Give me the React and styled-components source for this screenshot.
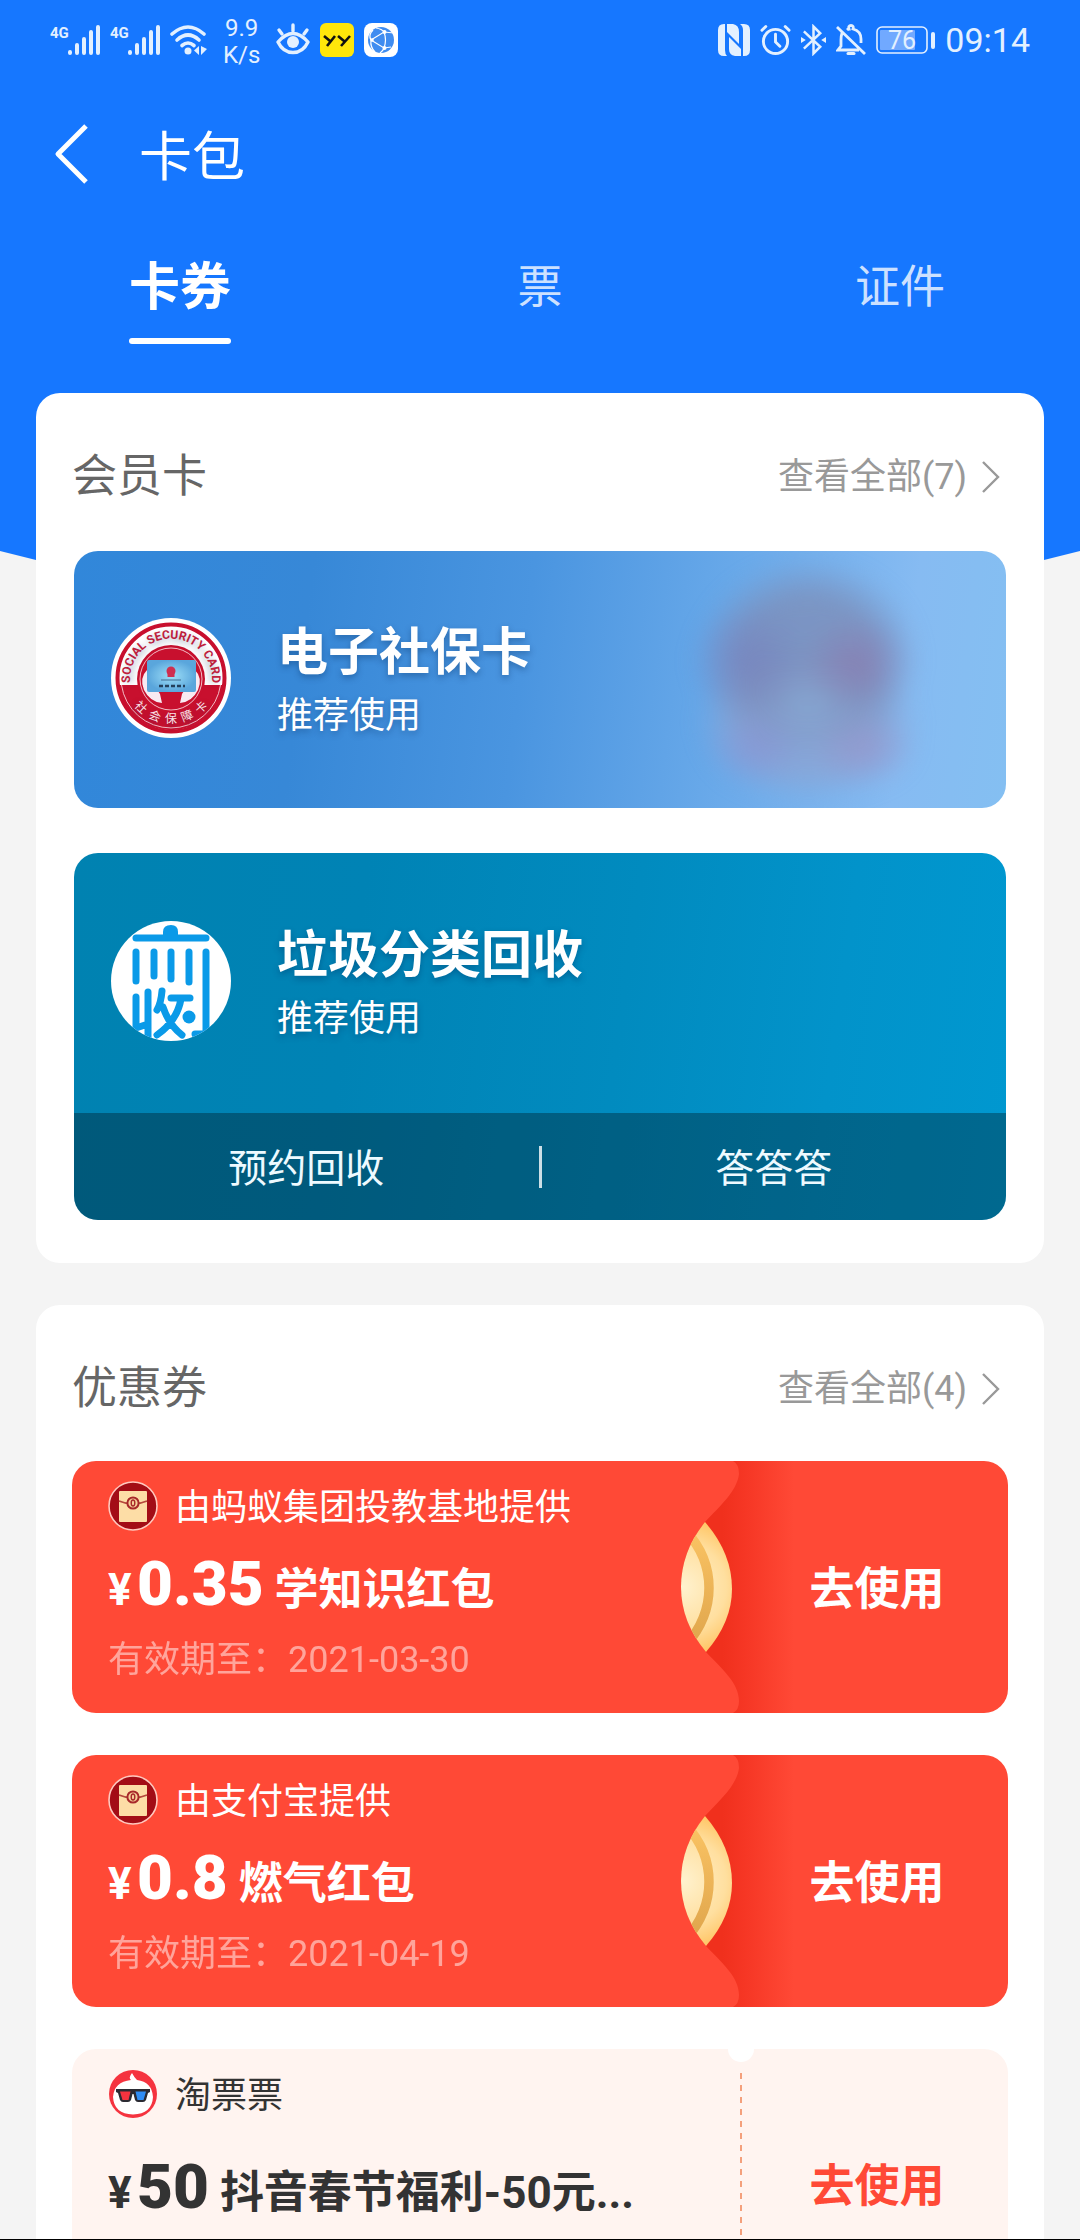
import React, { useState } from "react";
import styled, { createGlobalStyle, css } from "styled-components";

const GlobalStyle = createGlobalStyle`
  *, *::before, *::after { box-sizing: border-box; }
  body {
    margin: 0;
    background: #f4f4f4;
    font-family: Roboto, "Noto Sans CJK SC", sans-serif;
  }
  button { font: inherit; color: inherit; border: 0; padding: 0; margin: 0; background: none; cursor: pointer; }
  h1, h2, h3, p { margin: 0; font-weight: 400; }
  a { color: inherit; text-decoration: none; }
  svg { display: block; flex: none; }
`;

const Screen = styled.div`
  height: 100vh;
  overflow: hidden;
  border-bottom: 1px solid #000;
`;

const Hero = styled.header`
  padding-bottom: 216px;
  background: #1677ff;
  color: #fff;
  clip-path: polygon(0 0, 100% 0, 100% calc(100% - 9px), calc(100% - 36px) 100%, 36px 100%, 0 calc(100% - 9px));
`;

const StatusBar = styled.div`
  display: flex;
  justify-content: space-between;
  align-items: center;
  height: 80px;
  padding: 0 50px;
  color: #e3f0ff;
`;

const StatusGroup = styled.div`
  display: flex;
  align-items: center;
  gap: 10px;
`;

const NetSpeed = styled.span`
  margin: 3px 6px 0;
  font-size: 24px;
  line-height: 27px;
  text-align: center;
`;

const Clock = styled.time`
  font-size: 34px;
  line-height: 40px;
`;

const TitleBar = styled.div`
  display: flex;
  align-items: center;
  gap: 50px;
  height: 152px;
  padding: 0 54px 4px;
`;

const PageTitle = styled.h1`
  padding-top: 8px;
  font-size: 53px;
  line-height: 72px;
`;

const Tabs = styled.nav`
  display: grid;
  grid-template-columns: repeat(3, 1fr);
  justify-items: center;
`;

const Tab = styled.button`
  position: relative;
  height: 112px;
  padding-bottom: 10px;
  font-size: 45px;
  color: rgba(255, 255, 255, 0.8);
  ${(p) =>
    p.$active &&
    css`
      font-size: 51px;
      font-weight: 700;
      color: #fff;
      &::after {
        content: "";
        position: absolute;
        left: 0;
        right: 0;
        bottom: 0;
        height: 6px;
        border-radius: 3px;
        background: #fff;
      }
    `}
`;

const Content = styled.main`
  position: relative;
  display: flex;
  flex-direction: column;
  gap: 42px;
  margin-top: -167px;
  padding: 0 36px 42px;
`;

const Section = styled.section`
  border-radius: 24px;
  background: #fff;
`;

const SectionHeader = styled.div`
  display: flex;
  justify-content: space-between;
  align-items: center;
  height: 156px;
  padding: 12px 44px 0 36px;
`;

const SectionTitle = styled.h2`
  font-size: 45px;
  line-height: 64px;
  color: #666;
`;

const MoreLink = styled.a`
  display: flex;
  align-items: center;
  gap: 15px;
  font-size: 36px;
  line-height: 48px;
  color: #999;
`;

const MemberList = styled.div`
  display: flex;
  flex-direction: column;
  gap: 45px;
  padding: 2px 38px 43px;
`;

const MemberCard = styled.article`
  position: relative;
  overflow: hidden;
  border-radius: 24px;
  color: #fff;
  background: ${(p) =>
    p.$tone === "social"
      ? "linear-gradient(97deg, #3187da 0%, #3788d7 25%, #4a95e0 48%, #64a6e8 66%, #86bbf2 88%, #84bff2 100%)"
      : "linear-gradient(98deg, #0082b1 0%, #0083b5 30%, #018bbf 58%, #0293ca 80%, #0098d0 100%)"};
`;

const Glow = styled.div`
  position: absolute;
  top: 0;
  right: 60px;
  width: 260px;
  height: 100%;
  filter: blur(10px);
  background:
    radial-gradient(ellipse 55px 50px at 170px 112px, rgba(145, 110, 165, 0.5), transparent),
    radial-gradient(ellipse 60px 60px at 62px 110px, rgba(118, 118, 185, 0.45), transparent),
    radial-gradient(ellipse 50px 40px at 70px 196px, rgba(138, 140, 208, 0.5), transparent),
    radial-gradient(ellipse 55px 40px at 178px 198px, rgba(158, 140, 195, 0.5), transparent),
    radial-gradient(ellipse 60px 50px at 122px 158px, rgba(140, 176, 220, 0.6), transparent),
    radial-gradient(ellipse 112px 100px at 122px 108px, rgba(124, 144, 188, 0.85) 60%, transparent),
    radial-gradient(ellipse 112px 80px at 122px 172px, rgba(138, 164, 212, 0.8) 60%, transparent);
`;

const MemberTop = styled.div`
  position: relative;
  display: flex;
  align-items: center;
  gap: 46px;
  height: ${(p) => (p.$withActions ? "260px" : "257px")};
  padding: 0 37px 4px;
  text-shadow: 0 3px 6px rgba(0, 40, 90, 0.35);
`;

const MemberName = styled.h3`
  font-size: 51px;
  font-weight: 700;
  line-height: 76px;
`;

const MemberNote = styled.p`
  font-size: 36px;
  line-height: 50px;
`;

const MemberActions = styled.div`
  position: relative;
  display: flex;
  align-items: center;
  height: 107px;
  background: rgba(0, 0, 0, 0.31);
`;

const MemberAction = styled.button`
  flex: 1;
  height: 100%;
  padding-bottom: 4px;
  font-size: 39px;
  color: #eefaff;
`;

const Divider = styled.span`
  width: 3px;
  height: 42px;
  background: rgba(255, 255, 255, 0.8);
`;

const CouponList = styled.div`
  display: flex;
  flex-direction: column;
  gap: 42px;
  padding: 0 36px 43px;
`;

const Coupon = styled.article`
  position: relative;
  display: flex;
  overflow: hidden;
  border-radius: 24px;
  color: ${(p) => (p.$ticket ? "#333" : "#fff")};
  background: ${(p) => (p.$ticket ? "#fff4f0" : "#ff4936")};
`;

const CouponArt = styled.svg`
  position: absolute;
  top: 0;
  right: 208px;
`;

const Perforation = styled.div`
  position: absolute;
  top: 24px;
  bottom: 24px;
  right: 266px;
  width: 2px;
  background: repeating-linear-gradient(#f4a07c 0 6px, transparent 6px 12px);
`;

const Notch = styled.div`
  position: absolute;
  top: -13px;
  right: 254px;
  width: 26px;
  height: 26px;
  border-radius: 50%;
  background: #fff;
`;

const CouponMain = styled.div`
  position: relative;
  flex: 1;
  min-width: 0;
  padding: ${(p) => (p.$ticket ? "20px 0 66px 36px" : "20px 0 28px 36px")};
`;

const Provider = styled.div`
  display: flex;
  align-items: center;
  gap: 17px;
  height: 50px;
`;

const ProviderName = styled.span`
  padding-bottom: 4px;
  font-size: 36px;
`;

const CouponTitle = styled.h3`
  display: flex;
  align-items: baseline;
  height: ${(p) => (p.$ticket ? "134px" : "104px")};
  padding-top: ${(p) => (p.$ticket ? "16px" : "1px")};
  font-size: 44px;
  font-weight: 700;
  line-height: 64px;
  white-space: nowrap;
`;

const Currency = styled.small`
  width: 29px;
  font-size: 44px;
`;

const Amount = styled.strong`
  margin-right: 11px;
  font-size: 62px;
  line-height: 104px;
`;

const Validity = styled.p`
  padding-top: 1px;
  font-size: 36px;
  line-height: 49px;
  opacity: 0.5;
`;

const UseButton = styled.button`
  position: relative;
  width: 268px;
  padding: 0 0 4px 6px;
  font-size: 45px;
  font-weight: 700;
  color: ${(p) => (p.$ticket ? "#ff4936" : "#fff")};
`;

const Signal = () => (
  <svg width="50" height="34" viewBox="0 0 50 34">
    <text x="0" y="15" fontSize="15" fontWeight="700" fill="currentColor">4G</text>
    <g stroke="currentColor" strokeWidth="4" strokeLinecap="round">
      <path d="M20 29v1M27 22v8M34 16v14M41 9v21M48 4v26" />
    </g>
  </svg>
);

const Wifi = () => (
  <svg width="37" height="34" viewBox="0 0 37 34">
    <g fill="none" stroke="currentColor" strokeWidth="3.6" strokeLinecap="round">
      <path d="M2 11Q18 -3 34 11" />
      <path d="M7 17Q18 7 29 17" />
      <path d="M12 22.500Q18 17.500 24 22.500" />
    </g>
    <circle cx="18" cy="28" r="3.500" fill="currentColor" />
    <path d="M29 23v9l-5-4.500zM31 23v9l6-6z" fill="currentColor" />
  </svg>
);

const Eye = () => (
  <svg width="34" height="34" viewBox="0 0 34 34" fill="none" stroke="currentColor" strokeWidth="3.400" strokeLinecap="round">
    <path d="M2 19Q17 2 32 19Q27 29.500 17 29.500Q7 29.500 2 19Z" strokeLinejoin="round" />
    <circle cx="17" cy="19" r="6" fill="currentColor" stroke="none" />
    <path d="M17 2v6M3 7l3 4M31 7l-3 4" />
  </svg>
);

const YyApp = () => (
  <svg width="34" height="34" viewBox="0 0 34 34">
    <rect width="34" height="34" rx="6" fill="#ffe60a" />
    <path d="M4 13l6 5M15 13L7 23M18 13l6 5M30 13L21 23" stroke="#111" strokeWidth="2.600" />
  </svg>
);

const GlobeApp = () => (
  <svg width="34" height="34" viewBox="0 0 34 34">
    <rect width="34" height="34" rx="8" fill="#fff" />
    <circle cx="17" cy="17" r="13" fill="#3f8cf0" />
    <g fill="none" stroke="#fff" strokeWidth="1.200">
      <path d="M7 17L20 9L30 10M20 9Q23 17 20 25M7 17L20 25L27 24M7 17Q4 12 9 7M7 17Q6 24 11 29M20 9Q18 6 12 5M20 25Q19 28 16 30" />
    </g>
    <g fill="#fff"><circle cx="8" cy="17" r="1.800" /><circle cx="20.500" cy="9" r="2" /><circle cx="20.500" cy="25" r="2" /></g>
  </svg>
);

const Nfc = () => (
  <svg width="32" height="32" viewBox="0 0 32 32" fill="currentColor">
    <path d="M6 0H7L7 26Q7 30 9 32H6Q0 32 0 26V6Q0 0 6 0Z" />
    <path d="M9 0H15Q21 1 21 8V20L9 8Z" />
    <path d="M11 13L23 25V32H17Q11 31 11 25Z" />
    <path d="M22 0H26Q32 0 32 6V26Q32 32 26 32H25V6Q25 2 22 0Z" />
  </svg>
);

const Alarm = () => (
  <svg width="31" height="32" viewBox="0 0 32 32" fill="none" stroke="currentColor" strokeWidth="3" strokeLinecap="round">
    <circle cx="16" cy="17.500" r="12.500" />
    <path d="M16 10v8l4.500 4.500M2 6l4-4M30 6l-4-4" />
  </svg>
);

const Bluetooth = () => (
  <svg width="25" height="32" viewBox="0 0 26 32">
    <path d="M3 7L20 23L13 30V2L20 9L3 25" fill="none" stroke="currentColor" strokeWidth="2.600" />
    <path d="M0 13l5 3l-5 3zM26 13l-5 3l5 3z" fill="currentColor" />
  </svg>
);

const BellOff = () => (
  <svg width="30" height="32" viewBox="0 0 30 32" fill="none" stroke="currentColor" strokeWidth="2.800">
    <path d="M1 3L29 30M6 9Q5 12 5 16V22L2 26H23M11 6Q12 5 13 5Q12 1.500 15 1.500Q18 1.500 17 5Q25 7 25 15V19" />
    <path d="M12 29.500h6" strokeWidth="3" strokeLinecap="round" />
  </svg>
);

const Battery = () => (
  <svg width="59" height="32" viewBox="0 0 59 32">
    <rect x="1" y="3" width="50" height="26" rx="5" fill="none" stroke="currentColor" strokeWidth="1.600" />
    <rect x="4" y="6" width="35" height="20" rx="1" fill="#71a9ff" />
    <rect x="55" y="8" width="4" height="17" rx="2" fill="currentColor" />
    <text x="26" y="25" fontSize="25" fill="currentColor" textAnchor="middle">76</text>
  </svg>
);

const BackIcon = () => (
  <svg width="35" height="60" viewBox="0 0 35 60">
    <path d="M32 2L4 30L32 58" fill="none" stroke="#fff" strokeWidth="5" strokeLinejoin="round" />
  </svg>
);

const ChevronIcon = () => (
  <svg width="18" height="32" viewBox="0 0 18 32">
    <path d="M1 1L16 16L1 31" fill="none" stroke="#999" strokeWidth="2.400" />
  </svg>
);

const SocialLogo = () => (
  <svg width="120" height="120" viewBox="0 0 120 120">
    <defs>
      <path id="arcTop" d="M22 77A41 41 0 1 1 98 77" />
      <path id="arcBottom" d="M12 65A48 48 0 0 0 108 65" />
      <path id="arcMotto" d="M13 67A48 48 0 0 0 107 67" />
      <radialGradient id="chip">
        <stop offset="0" stopColor="#9fe0f8" />
        <stop offset="1" stopColor="#5aa6dc" />
      </radialGradient>
    </defs>
    <circle cx="60" cy="60" r="60" fill="#fff" />
    <circle cx="60" cy="60" r="53.500" fill="#fff" stroke="#c8102e" strokeWidth="4" />
    <path d="M8 67A52.500 52.500 0 0 0 112 67Z" fill="#c8102e" />
    <circle cx="60" cy="61" r="34" fill="#c8102e" />
    <circle cx="60" cy="61" r="31" fill="none" stroke="#f3bcc6" strokeWidth="1" />
    <path d="M10.500 67A50 50 0 0 0 109.500 67" fill="none" stroke="#f3bcc6" strokeWidth="1" />
    <path d="M36 52Q28 60 33 72Q39 84 51 85L49 76Q45 69 39 64Z M84 52Q92 60 87 72Q81 84 69 85L71 76Q75 69 81 64Z" fill="#f8eaf2" />
    <rect x="36" y="42" width="49" height="32" rx="2" fill="url(#chip)" />
    <circle cx="60" cy="53" r="4.500" fill="#cf2f50" />
    <path d="M56.500 53h7v6h-7z" fill="#cf2f50" />
    <path d="M50 62h20" stroke="#426f93" strokeWidth="1" />
    <path d="M48 68h26" stroke="#24405c" strokeWidth="2.500" strokeDasharray="4 2" />
    <text fontSize="12" fontWeight="700" fill="#c0203c" textAnchor="middle">
      <textPath href="#arcTop" startOffset="50%">SOCIAL SECURITY CARD</textPath>
    </text>
    <text fontSize="12" fill="#fbe3e8" textAnchor="middle" fontFamily="Noto Sans CJK SC, sans-serif">
      <textPath href="#arcMotto" startOffset="50%">{"社\u2002会\u2002保\u2002障\u2002卡"}</textPath>
    </text>
  </svg>
);

const RecycleLogo = () => (
  <svg width="120" height="120" viewBox="0 0 120 120">
    <defs>
      <clipPath id="disc"><circle cx="60" cy="60" r="60" /></clipPath>
    </defs>
    <circle cx="60" cy="60" r="60" fill="#fff" />
    <g clipPath="url(#disc)" fill="none" stroke="#0a9ae8" strokeWidth="7" strokeLinecap="round">
      <path d="M25 17H95" />
      <path d="M52 15V11Q52 4 60 4Q67 4 67 11V15Z" fill="#0a9ae8" stroke="none" />
      <path d="M25 31V60M43 31V55M60 31V58M78 31V61M95 31V113H84" />
      <path d="M25 76V107L34 104M37 71V120" />
      <path d="M51 70Q50 82 46 89M60 77H79M70 78Q66 100 46 114M52 86Q58 104 71 114" />
      <circle cx="78" cy="96" r="6.500" fill="#0a9ae8" stroke="none" />
    </g>
  </svg>
);

const EnvelopeLogo = () => (
  <svg width="50" height="50" viewBox="0 0 50 50">
    <circle cx="25" cy="25" r="24" fill="#a30d16" stroke="#ffc9bf" strokeWidth="1.600" />
    <rect x="11" y="10" width="28" height="31" rx="1" fill="#fddda6" />
    <path d="M11 20Q25 26 39 20" fill="none" stroke="#b5483c" strokeWidth="1.600" />
    <circle cx="25" cy="22" r="5.600" fill="#f6cf98" stroke="#a8282a" strokeWidth="2" />
    <ellipse cx="25" cy="22" rx="1.800" ry="3" fill="none" stroke="#a8282a" strokeWidth="1.400" />
  </svg>
);

const MovieLogo = () => (
  <svg width="50" height="50" viewBox="0 0 50 50">
    <circle cx="25" cy="25" r="24" fill="#f5333f" />
    <path d="M24 4Q20 9 23 11Q6 13 5 28Q6 45 25 45.500Q44 45 45 28Q44 13 29 11Q26 8 24 4Z" fill="#fff" />
    <path d="M8 20H42V23L40 24L38 31Q37 33 35 33H30Q28 33 27 31L25.500 25H24.500L23 31Q22 33 20 33H15Q13 33 12 31L10 24L8 23Z" fill="#2b2b33" />
    <path d="M12 22.500H22.500L20.500 31H14.500Z" fill="#f5333f" />
    <path d="M27.500 22.500H38L35.500 31H29.500Z" fill="#2f8df5" />
  </svg>
);

const EnvelopeArt = () => (
  <CouponArt width="130" height="252" viewBox="0 0 130 252" aria-hidden="true">
    <defs>
      <linearGradient id="fold">
        <stop offset="0.350" stopColor="#f0301d" />
        <stop offset="0.550" stopColor="#f63725" />
        <stop offset="0.950" stopColor="#ff4936" />
      </linearGradient>
      <radialGradient id="coin" gradientUnits="userSpaceOnUse" cx="12" cy="126" r="68">
        <stop offset="0" stopColor="#fff2cf" />
        <stop offset="0.650" stopColor="#ffdf9f" />
        <stop offset="1" stopColor="#ffc667" />
      </radialGradient>
      <linearGradient id="ring" gradientUnits="userSpaceOnUse" x1="0" y1="70" x2="0" y2="184">
        <stop offset="0" stopColor="#fac363" />
        <stop offset="1" stopColor="#dfa54c" />
      </linearGradient>
      <clipPath id="lens"><path d="M35 61Q11 91 11 126Q11 161 36 191Q62 161 62 128Q62 92 35 61Z" /></clipPath>
    </defs>
    <path d="M63 0Q69 3 69 13C67 30 50 45 35 61Q11 91 11 126Q11 161 36 191C52 208 69 222 69 240Q69 249 63 252H130V0Z" fill="url(#fold)" />
    <g clipPath="url(#lens)">
      <rect x="5" y="55" width="65" height="145" fill="url(#coin)" />
      <path d="M16 70Q39 95 39 127Q39 158 16 184" fill="none" stroke="url(#ring)" strokeWidth="9.500" />
    </g>
  </CouponArt>
);

const TABS = ["卡券", "票", "证件"];

const MEMBERS = [
  { tone: "social", name: "电子社保卡", Logo: SocialLogo, actions: [] },
  { tone: "recycle", name: "垃圾分类回收", Logo: RecycleLogo, actions: ["预约回收", "答答答"] },
];

const COUPONS = [
  { provider: "由蚂蚁集团投教基地提供", amount: "0.35", title: "学知识红包", until: "2021-03-30" },
  { provider: "由支付宝提供", amount: "0.8", title: "燃气红包", until: "2021-04-19" },
  { provider: "淘票票", amount: "50", title: "抖音春节福利-50元...", ticket: true },
];

function Header({ title, count }) {
  return (
    <SectionHeader>
      <SectionTitle>{title}</SectionTitle>
      <MoreLink href="#">查看全部({count})<ChevronIcon /></MoreLink>
    </SectionHeader>
  );
}

export default function App() {
  const [active, setActive] = useState(0);
  return (
    <Screen>
      <GlobalStyle />
      <Hero>
        <StatusBar>
          <StatusGroup>
            <Signal />
            <Signal />
            <Wifi />
            <NetSpeed>9.9<br />K/s</NetSpeed>
            <Eye />
            <YyApp />
            <GlobeApp />
          </StatusGroup>
          <StatusGroup>
            <Nfc />
            <Alarm />
            <Bluetooth />
            <BellOff />
            <Battery />
            <Clock>09:14</Clock>
          </StatusGroup>
        </StatusBar>
        <TitleBar>
          <button aria-label="返回"><BackIcon /></button>
          <PageTitle>卡包</PageTitle>
        </TitleBar>
        <Tabs>
          {TABS.map((t, i) => (
            <Tab key={t} $active={i === active} onClick={() => setActive(i)}>{t}</Tab>
          ))}
        </Tabs>
      </Hero>
      <Content>
        <Section>
          <Header title="会员卡" count={7} />
          <MemberList>
            {MEMBERS.map(({ tone, name, Logo, actions }) => (
              <MemberCard key={name} $tone={tone}>
                {tone === "social" && <Glow />}
                <MemberTop $withActions={actions.length > 0}>
                  <Logo />
                  <div>
                    <MemberName>{name}</MemberName>
                    <MemberNote>推荐使用</MemberNote>
                  </div>
                </MemberTop>
                {actions.length > 0 && (
                  <MemberActions>
                    <MemberAction>{actions[0]}</MemberAction>
                    <Divider />
                    <MemberAction>{actions[1]}</MemberAction>
                  </MemberActions>
                )}
              </MemberCard>
            ))}
          </MemberList>
        </Section>
        <Section>
          <Header title="优惠券" count={4} />
          <CouponList>
            {COUPONS.map((c) => (
              <Coupon key={c.title} $ticket={c.ticket}>
                {c.ticket ? <><Perforation /><Notch /></> : <EnvelopeArt />}
                <CouponMain $ticket={c.ticket}>
                  <Provider>
                    {c.ticket ? <MovieLogo /> : <EnvelopeLogo />}
                    <ProviderName>{c.provider}</ProviderName>
                  </Provider>
                  <CouponTitle $ticket={c.ticket}>
                    <Currency>¥</Currency>
                    <Amount>{c.amount}</Amount>
                    <span>{c.title}</span>
                  </CouponTitle>
                  {c.until && <Validity>有效期至：{c.until}</Validity>}
                </CouponMain>
                <UseButton $ticket={c.ticket}>去使用</UseButton>
              </Coupon>
            ))}
          </CouponList>
        </Section>
      </Content>
    </Screen>
  );
}
